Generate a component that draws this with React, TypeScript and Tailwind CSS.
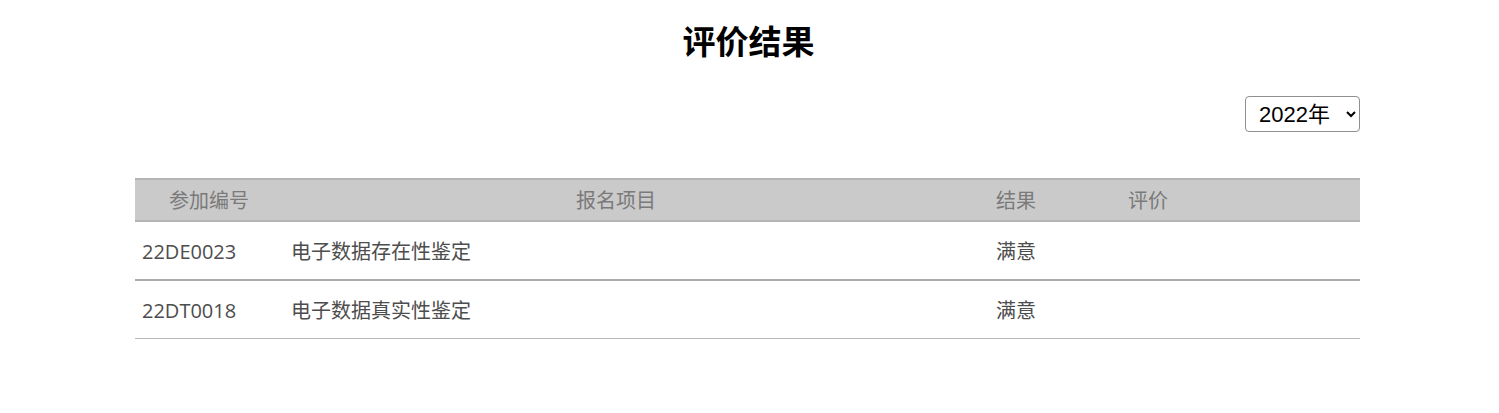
import React, { useState } from "react";

type Row = {
  code: string;
  project: string;
  result: string;
  comment: string;
};

const rows: Row[] = [
  { code: "22DE0023", project: "电子数据存在性鉴定", result: "满意", comment: "" },
  { code: "22DT0018", project: "电子数据真实性鉴定", result: "满意", comment: "" },
];

const App = () => {
  const [year, setYear] = useState<string>("2022");

  return (
    <div className="w-full min-h-[413px] bg-white font-['Open_Sans','Noto_Sans_CJK_SC',sans-serif]">
      <h1 className="text-center text-[33px] leading-[48px] pt-[16px] pr-[2px] font-bold text-black font-['Noto_Sans_CJK_SC',sans-serif]">
        评价结果
      </h1>

      <div className="flex flex-col ml-[135px] w-[1225px]">
        <div className="flex justify-end mt-[32px]">
          <select
            value={year}
            onChange={(e) => setYear(e.target.value)}
            className="h-[36px] w-[115px] pl-[9px] pr-[4px] border border-[#8f8f8f] rounded-[4px] bg-white text-[22px] text-black font-['Liberation_Sans','Noto_Sans_CJK_SC',sans-serif]"
          >
            <option value="2022">2022年</option>
            <option value="2021">2021年</option>
            <option value="2020">2020年</option>
          </select>
        </div>

        <div className="mt-[46px] text-[20px]">
          <div className="flex items-center h-[44px] pt-[1px] bg-[#cacaca] border-t-2 border-b-2 border-[#b4b4b4] text-[#7a7a7a]">
            <div className="w-[148px] text-center">参加编号</div>
            <div className="w-[666px] text-center">报名项目</div>
            <div className="w-[134px] text-center">结果</div>
            <div className="w-[130px] text-center">评价</div>
          </div>

          {rows.map((row, i) => (
            <div
              key={row.code}
              className={`grid grid-cols-[148px_706px_1fr] items-center pt-[3px] text-[#4d4d4d] ${
                i === 0
                  ? "h-[59px] border-b-2 border-[#ababab]"
                  : "h-[58px] border-b border-[#b8b8b8]"
              }`}
            >
              <div className="pl-[7px]">{row.code}</div>
              <div className="pl-[8px]">{row.project}</div>
              <div className="pl-[7px]">{row.result}</div>
            </div>
          ))}
        </div>
      </div>
    </div>
  );
};

export default App;
